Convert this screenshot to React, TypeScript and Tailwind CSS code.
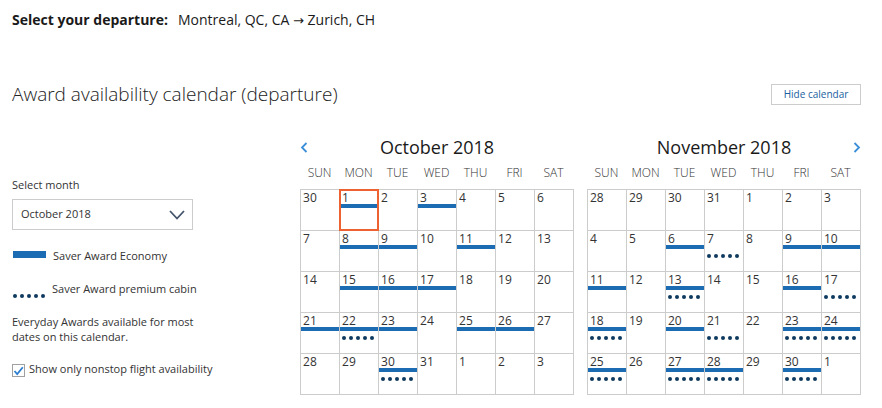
import React from 'react';

type Day = { d: number; bar?: boolean; dots?: boolean; sel?: boolean };

const WEEKDAYS = ['SUN', 'MON', 'TUE', 'WED', 'THU', 'FRI', 'SAT'];

// quick helper: "b" = bar, "p" = premium dots, "s" = selected
const parse = (row: string): Day[] =>
  row.split(' ').map(tok => {
    const d = parseInt(tok, 10);
    return { d, bar: tok.includes('b'), dots: tok.includes('p'), sel: tok.includes('s') };
  });

const october: Day[][] = [
  '30 1bs 2 3b 4 5 6',
  '7 8b 9b 10 11b 12 13',
  '14 15b 16b 17b 18 19 20',
  '21b 22bp 23b 24 25b 26b 27',
  '28 29 30bp 31 1 2 3',
].map(parse);

const november: Day[][] = [
  '28 29 30 31 1 2 3',
  '4 5 6b 7p 8 9b 10b',
  '11b 12 13bp 14 15 16b 17p',
  '18bp 19 20b 21p 22 23bp 24bp',
  '25bp 26 27bp 28bp 29 30bp 1',
].map(parse);

const Dots = () => (
  <div className="flex gap-[3px]">
    {[0, 1, 2, 3, 4].map(i => (
      <span key={i} className="w-[4px] h-[4px] rounded-full bg-[#0f3a5f]" />
    ))}
  </div>
);

const Chevron = ({ dir }: { dir: 'left' | 'right' }) => (
  <svg width="8" height="11" viewBox="0 0 8 11" fill="none">
    <path
      d={dir === 'left' ? 'M6.5 1 L2 5.5 L6.5 10' : 'M1.5 1 L6 5.5 L1.5 10'}
      stroke="#3b8fd8"
      strokeWidth="1.8"
    />
  </svg>
);

const Cell = ({ day }: { day: Day }) => (
  <div className="relative bg-white">
    <div className="pl-[2px] pt-[1px] h-[14px] text-[12px] leading-[13px] text-[#333]">{day.d}</div>
    <div className={`h-[4px] ${day.bar ? 'bg-[#1b6cb2]' : ''}`} />
    <div className="pl-[2px] mt-[5px]">{day.dots && <Dots />}</div>
    {day.sel && <div className="absolute -inset-px border-2 border-[#ee6232]" />}
  </div>
);

const Month = ({ title, weeks, nav }: { title: string; weeks: Day[][]; nav: 'left' | 'right' }) => (
  <div className="w-[274px] mt-[30px]">
    <div className="flex items-center h-[22px]">
      <div className="w-[20px] flex justify-start">{nav === 'left' && <Chevron dir="left" />}</div>
      <div className="flex-1 text-center text-[18px] leading-[22px] text-[#1a1a1a]">{title}</div>
      <div className="w-[20px] flex justify-end">{nav === 'right' && <Chevron dir="right" />}</div>
    </div>
    <div className="grid grid-cols-[repeat(7,39px)] mt-[7px] mb-[8px]">
      {WEEKDAYS.map(w => (
        <div key={w} className="text-center text-[12px] leading-[16px] font-light text-[#333]">{w}</div>
      ))}
    </div>
    <div className="grid grid-cols-[repeat(7,38px)] auto-rows-[40px] gap-px bg-[#cccccc] p-px w-fit">
      {weeks.flat().map((day, i) => (
        <Cell key={i} day={day} />
      ))}
    </div>
  </div>
);

const LeftPanel = () => (
  <div className="w-[289px] pt-[72px] text-[11px] text-[#333]">
    <div className="leading-[14px]">Select month</div>
    <div className="mt-[7px] w-[181px] h-[31px] border border-[#cccccc] flex items-center justify-between pl-[8px] pr-[7px]">
      <span className="text-[11px] text-[#333]">October 2018</span>
      <svg width="16" height="10" viewBox="0 0 16 10" fill="none">
        <path d="M1 1 L8 8.5 L15 1" stroke="#44546a" strokeWidth="1.8" />
      </svg>
    </div>
    <div className="mt-[19px] flex items-start pl-px">
      <div className="mt-[2px] w-[33px] h-[7px] bg-[#1b6cb2]" />
      <span className="ml-[7px] leading-[14px]">Saver Award Economy</span>
    </div>
    <div className="mt-[19px] flex items-start pl-px">
      <div className="mt-[12px]"><Dots /></div>
      <span className="ml-[7px] leading-[14px]">Saver Award premium cabin</span>
    </div>
    <p className="mt-[16px] w-[182px] leading-[15px]">Everyday Awards available for most dates on this calendar.</p>
    <label className="mt-[18px] flex items-start">
      <span className="mt-[2px] w-[13px] h-[13px] border border-[#a0a0a0] bg-white flex items-center justify-center">
        <svg width="11" height="10" viewBox="0 0 11 10" fill="none">
          <path d="M1.5 5 L4.2 8 L9.8 1.2" stroke="#2e7fd0" strokeWidth="1.8" />
        </svg>
      </span>
      <span className="ml-[4px] leading-[14px]">Show only nonstop flight availability</span>
    </label>
  </div>
);

export default function App() {
  return (
    <div className="w-[882px] h-[408px] bg-white pl-[12px] pr-[21px] pt-[11px]" style={{ fontFamily: '"Open Sans", sans-serif' }}>
      <div className="h-[18px] text-[14px] leading-[18px] text-[#1a1a1a] overflow-hidden">
        <span className="font-bold">Select your departure:</span>
        <span className="ml-[10px]">
          Montreal, QC, CA <span className="font-['DejaVu_Sans',sans-serif] text-[13px] leading-[0]">→</span> Zurich, CH
        </span>
      </div>
      <div className="mt-[53px] flex items-center justify-between h-[24px]">
        <h1 className="text-[19px] leading-[24px] font-light text-[#222]">Award availability calendar (departure)</h1>
        <button className="w-[90px] h-[21px] border border-[#cccccc] text-[10px] text-[#1a5fa0] bg-white">Hide calendar</button>
      </div>
      <div className="flex">
        <LeftPanel />
        <Month title="October 2018" weeks={october} nav="left" />
        <div className="w-[13px]" />
        <Month title="November 2018" weeks={november} nav="right" />
      </div>
    </div>
  );
}
